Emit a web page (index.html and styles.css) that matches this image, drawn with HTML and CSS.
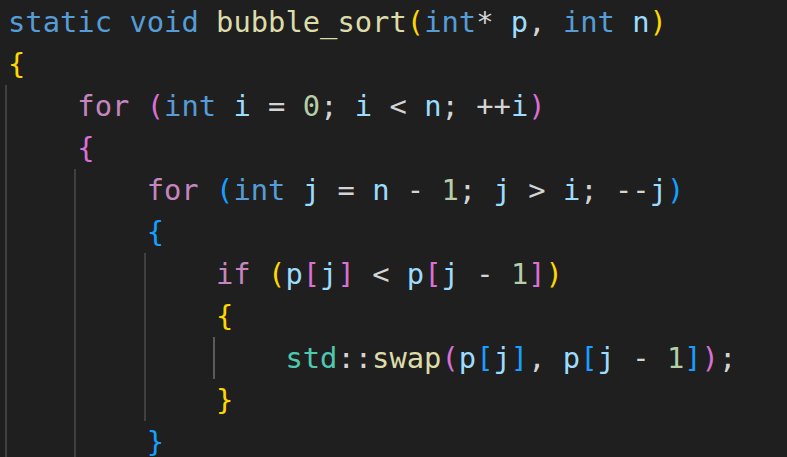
FILE: index.html
```html
<!DOCTYPE html>
<html>
<head>
<meta charset="utf-8">
<link rel="stylesheet" href="styles.css">
</head>
<body>
<div class="code">
<div class="ln"><span class="kw">static</span> <span class="kw">void</span> <span class="fn">bubble_sort</span><span class="b1">(</span><span class="kw">int</span><span class="op">*</span> <span class="var">p</span><span class="op">,</span> <span class="kw">int</span> <span class="var">n</span><span class="b1">)</span></div>
<div class="ln"><span class="b1">{</span></div>
<div class="ln"><span class="ind"></span><span class="ctl">for</span> <span class="b2">(</span><span class="kw">int</span> <span class="var">i</span> <span class="op">=</span> <span class="num">0</span><span class="op">;</span> <span class="var">i</span> <span class="op">&lt;</span> <span class="var">n</span><span class="op">;</span> <span class="op">++</span><span class="var">i</span><span class="b2">)</span></div>
<div class="ln"><span class="ind"></span><span class="b2">{</span></div>
<div class="ln"><span class="ind"></span><span class="ind"></span><span class="ctl">for</span> <span class="b3">(</span><span class="kw">int</span> <span class="var">j</span> <span class="op">=</span> <span class="var">n</span> <span class="op">-</span> <span class="num">1</span><span class="op">;</span> <span class="var">j</span> <span class="op">&gt;</span> <span class="var">i</span><span class="op">;</span> <span class="op">--</span><span class="var">j</span><span class="b3">)</span></div>
<div class="ln"><span class="ind"></span><span class="ind"></span><span class="b3">{</span></div>
<div class="ln"><span class="ind"></span><span class="ind"></span><span class="ind"></span><span class="ctl">if</span> <span class="b1">(</span><span class="var">p</span><span class="b2">[</span><span class="var">j</span><span class="b2">]</span> <span class="op">&lt;</span> <span class="var">p</span><span class="b2">[</span><span class="var">j</span> <span class="op">-</span> <span class="num">1</span><span class="b2">]</span><span class="b1">)</span></div>
<div class="ln"><span class="ind"></span><span class="ind"></span><span class="ind"></span><span class="b1">{</span></div>
<div class="ln"><span class="ind"></span><span class="ind"></span><span class="ind"></span><span class="ind act"></span><span class="ns">std</span><span class="op">::</span><span class="fn">swap</span><span class="b2">(</span><span class="var">p</span><span class="b3">[</span><span class="var">j</span><span class="b3">]</span><span class="op">,</span> <span class="var">p</span><span class="b3">[</span><span class="var">j</span> <span class="op">-</span> <span class="num">1</span><span class="b3">]</span><span class="b2">)</span><span class="op">;</span></div>
<div class="ln"><span class="ind"></span><span class="ind"></span><span class="ind"></span><span class="b1">}</span></div>
<div class="ln"><span class="ind"></span><span class="ind"></span><span class="b3">}</span></div>
</div>
</body>
</html>
```
FILE: styles.css
```css
html, body {
  margin: 0;
  padding: 0;
  background: #1f1f1f;
  overflow: hidden;
}
.code {
  padding: 1px 0 0 8px;
  font-family: "DejaVu Sans Mono", "Liberation Mono", monospace;
  font-size: 28.8px;
  line-height: 42px;
  color: #d4d4d4;
}
.ln {
  height: 42px;
  white-space: pre;
}
.ind {
  display: inline-block;
  width: calc(4ch + 3px);
  margin-left: -3px;
  height: 42px;
  vertical-align: top;
  background: linear-gradient(#404040, #404040) no-repeat 0 0 / 2px 100%;
}
.ind.act {
  background-image: linear-gradient(#5a5a5a, #5a5a5a);
}
.kw { color: #569cd6; }
.ctl { color: #c586c0; }
.fn { color: #dcdcaa; }
.var { color: #9cdcfe; }
.num { color: #b5cea8; }
.op { color: #d4d4d4; }
.ns { color: #4ec9b0; }
.b1 { color: #ffd700; }
.b2 { color: #da70d6; }
.b3 { color: #179fff; }
```
